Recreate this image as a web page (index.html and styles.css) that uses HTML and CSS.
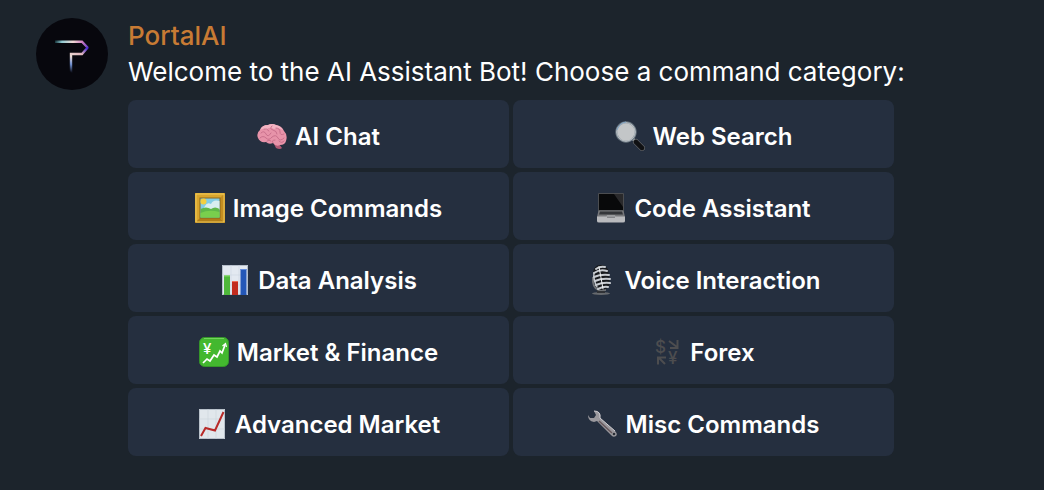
FILE: index.html
```html
<!DOCTYPE html>
<html lang="en">

<head>
    <meta charset="UTF-8">
    <meta name="viewport" content="width=device-width, initial-scale=1.0">
    <title>PortalAI</title>
    <link rel="stylesheet" href="styles.css">
</head>

<body>
    <main class="message">
        <svg class="avatar" viewBox="0 0 72 72" aria-hidden="true">
            <defs>
                <linearGradient id="logo" gradientUnits="userSpaceOnUse" x1="19" y1="22" x2="54" y2="30">
                    <stop offset="0" stop-color="#0d2a30" />
                    <stop offset=".2" stop-color="#8fc9d2" />
                    <stop offset=".5" stop-color="#f2dcd6" />
                    <stop offset=".75" stop-color="#cf7fc0" />
                    <stop offset="1" stop-color="#4326c8" />
                </linearGradient>
                <linearGradient id="logoStem" gradientUnits="userSpaceOnUse" x1="50" y1="30" x2="36" y2="55">
                    <stop offset="0" stop-color="#4a2bd0" />
                    <stop offset=".25" stop-color="#e0b5bd" />
                    <stop offset=".5" stop-color="#ead9d2" />
                    <stop offset=".75" stop-color="#6f8fd0" />
                    <stop offset="1" stop-color="#08080f" />
                </linearGradient>
            </defs>
            <circle cx="36" cy="36" r="36" fill="#07070d" />
            <g fill="none" stroke-width="2.4">
                <path d="M19 23.7H46L52 30" stroke="url(#logo)" />
                <path d="M51.7 29.5L46 36H35V55" stroke="url(#logoStem)" />
            </g>
        </svg>

        <div class="content">
            <h1 class="sender">PortalAI</h1>
            <p class="text">Welcome to the AI Assistant Bot! Choose a command category:</p>

            <div class="keyboard">
                <button type="button">
                    <svg class="icon" viewBox="0 0 30 30" aria-hidden="true">
                        <path d="M17 23L22 23L25 27Q23 29 19 27Z" fill="#b25a75" />
                        <path d="M1 17Q-1 12 3 9Q5 4 11 4Q15 2 19 4Q25 5 27 10Q31 14 29 20Q28 24 23 24Q19 26 16 22Q12 24 9 21Q3 22 1 17Z" fill="#e793a9" />
                        <path d="M3 9Q5 4 11 4Q15 2 19 4Q24 5 26 9Q21 6 17 8Q12 5 9 9Q6 7 3 9Z" fill="#f3b3c2" />
                        <path d="M4 12Q7 9 9 13T14 12M7 8Q10 7 12 10M15 5Q12 8 16 9T20 13M19 7Q23 7 23 11T27 13M3 17Q6 14 9 17T15 16Q19 13 21 17T27 17M16 22Q14 19 18 19M22 20Q25 23 27 20M10 20Q12 18 14 20" fill="none" stroke="#c9708c" stroke-width="1" stroke-linecap="round" />
                    </svg>
                    AI Chat
                </button>
                <button type="button">
                    <svg class="icon" viewBox="0 0 30 30" aria-hidden="true">
                        <path d="M18 18L22 22" stroke="#a6abb0" stroke-width="3" />
                        <path d="M21 21L27 27" stroke="#6a6d70" stroke-width="6" stroke-linecap="round" />
                        <path d="M21 21L27 27" stroke="#101113" stroke-width="4.6" stroke-linecap="round" />
                        <circle cx="11" cy="11" r="9.700" fill="#c3c6c8" stroke="#68747e" stroke-width="2" />
                        <circle cx="11" cy="11" r="9.300" fill="none" stroke="#e5eaed" stroke-width=".7" />
                        <path d="M2 9Q4 2 11 1" fill="none" stroke="#7fa3c4" stroke-width="1" />
                    </svg>
                    Web Search
                </button>
                <button type="button">
                    <svg class="icon" viewBox="0 0 30 30" aria-hidden="true">
                        <path d="M0 0H30V30H0Z" fill="#d9a52c" />
                        <path d="M0 30L5 25H25L30 30Z" fill="#b07d18" />
                        <path d="M30 0V30L25 25V5Z" fill="#c48e20" />
                        <path d="M1 1H29V29H1Z" fill="none" stroke="#f0ca58" stroke-width="1" />
                        <path d="M4.500 4.500H25.500V25.500H4.500Z" fill="#8b661a" />
                        <path d="M5.500 5.500H24.500V24.500H5.500Z" fill="#83cde5" />
                        <path d="M10 13Q12 9 16 11Q18 6 24.500 8V17H8Z" fill="#d8eef0" />
                        <circle cx="8.500" cy="8.500" r="3" fill="#f4cf3f" />
                        <path d="M5.500 16Q11 13 16 16Q20 13 24.500 16V24.500H5.500Z" fill="#5fb84a" />
                        <path d="M5.500 20Q14 16 24.500 19V24.500H5.500Z" fill="#79cf4d" />
                    </svg>
                    Image Commands
                </button>
                <button type="button">
                    <svg class="icon" viewBox="0 0 30 30" aria-hidden="true">
                        <rect x="2" y="0" width="26" height="19" rx="1" fill="#4b4d50" />
                        <path d="M3 1H27V17H3Z" fill="#08090a" />
                        <path d="M18 1H27V14Z" fill="#29292b" />
                        <path d="M2.500 17.500H27.500L29 24H1Z" fill="#77787b" />
                        <path d="M4 18.500H26L27 21.500H3Z" fill="#333539" />
                        <path d="M11 22H19L19.500 24H10.500Z" fill="#9b9c9f" />
                        <path d="M1 23.500H29V28Q29 29.500 27 29.500H3Q1 29.500 1 28Z" fill="#b9babd" />
                        <path d="M11 23.500H19V25H11Z" fill="#85868a" />
                    </svg>
                    Code Assistant
                </button>
                <button type="button">
                    <svg class="icon" viewBox="0 0 30 30" aria-hidden="true">
                        <path d="M2 0H28V30H2Z" fill="#e3e9f1" />
                        <path d="M2.500 .5H27.500V29.500H2.500Z" fill="none" stroke="#b4bdc9" />
                        <path d="M2 10H28M2 20H28M11 0V30M19 0V30" stroke="#ccd6e3" stroke-width=".6" />
                        <path d="M4 10.500H10V30H4Z" fill="#4fb83b" />
                        <path d="M12 16H18V30H12Z" fill="#c32c20" />
                        <path d="M20.500 4H26.500V30H20.500Z" fill="#2457b7" />
                        <path d="M4 11H10" stroke="#82dc62" />
                        <path d="M12 16.500H18" stroke="#ef6d5a" />
                        <path d="M20.500 4.500H26.500" stroke="#608be0" />
                    </svg>
                    Data Analysis
                </button>
                <button type="button">
                    <svg class="icon" viewBox="0 0 30 30" aria-hidden="true">
                        <ellipse cx="15" cy="28.500" rx="9" ry="1.500" fill="#66696d" />
                        <path d="M11 23H19V28H11Z" fill="#303236" />
                        <path d="M7 12Q6 23 13 25H20" fill="none" stroke="#6e7175" stroke-width="2" />
                        <rect x="8" y="0" width="15" height="25" rx="7" fill="#17191c" transform="rotate(-7 15 13)" />
                        <g fill="none" stroke="#c7cbd0" stroke-width="2" stroke-linecap="round">
                            <path d="M10 4Q14 1 19 2M8 8Q14 4 21 6M8 12Q15 9 23 10M9 16Q16 13 24 14M10 20Q17 17 24 18M12 24Q18 21 22 22" />
                            <path d="M13 2Q15 12 17 24" stroke="#f1f3f4" stroke-width="1" />
                            <path d="M8 8Q7 14 11 22" stroke-width="1.400" />
                        </g>
                    </svg>
                    Voice Interaction
                </button>
                <button type="button">
                    <svg class="icon" viewBox="0 0 30 30" aria-hidden="true">
                        <rect x=".5" y=".5" width="29" height="29" rx="5" fill="#43b82f" stroke="#35962a" />
                        <path d="M5 1.500H25" stroke="#73d45c" />
                        <g fill="none" stroke="#fff" stroke-width="1.700">
                            <path d="M4 26L8 22L11 24L15 18L18 20L21 14L23 16L26 8" />
                            <path d="M23.500 9L26.500 6.500L27.500 10" stroke-width="1.200" />
                        </g>
                        <text x="4" y="17" font-family="Inter, sans-serif" font-size="15" font-weight="500" fill="#fff">¥</text>
                    </svg>
                    Market &amp; Finance
                </button>
                <button type="button">
                    <svg class="icon" viewBox="0 0 30 30" aria-hidden="true">
                        <g fill="#4d4d4f" font-family="Inter, sans-serif" font-size="17" font-weight="500">
                            <text x="3" y="16">$</text>
                            <text x="16" y="27">¥</text>
                        </g>
                        <g fill="none" stroke="#4d4d4f" stroke-width="2">
                            <path d="M17 4L25 10M25.500 3V11H18" />
                            <path d="M13 27L7 21M6 27.500V20.500H14" />
                        </g>
                    </svg>
                    Forex
                </button>
                <button type="button">
                    <svg class="icon" viewBox="0 0 30 30" aria-hidden="true">
                        <path d="M2 0H28V30H2Z" fill="#e1e7ec" />
                        <path d="M2.500 .5H27.500V29.500H2.500Z" fill="none" stroke="#b8c1ca" />
                        <path d="M2 10H28M2 20H28M11 0V30M19 0V30" stroke="#cbd4dc" stroke-width=".6" />
                        <path d="M4 27L8.500 19L18 21.500L26.500 3" fill="none" stroke="#b82a28" stroke-width="2" />
                    </svg>
                    Advanced Market
                </button>
                <button type="button">
                    <svg class="icon" viewBox="0 0 30 30" aria-hidden="true">
                        <path d="M6 2L8 6L6 9L2 9L0 6Q0 12 6 13L9 12L23 26Q25 29 28 27Q30 25 27 22L12 9Q14 3 6 2Z" fill="#9a989d" />
                        <path d="M6 2Q13 2 12 9L27 22" fill="none" stroke="#d2d0d4" stroke-width="1" />
                        <path d="M11 12L24 24" stroke="#65575b" stroke-width="1.500" />
                        <circle cx="26" cy="25" r="1.300" fill="#292d35" />
                    </svg>
                    Misc Commands
                </button>
            </div>
        </div>
    </main>
</body>

</html>
```
FILE: styles.css
```css
* {
    box-sizing: border-box;
}

body {
    margin: 0;
    background: #1c242c;
    color: #ffffff;
    font-family: Inter, "Liberation Sans", sans-serif;
}

.message {
    display: flex;
    align-items: flex-start;
    gap: 20px;
    padding: 18px 36px 34px;
}

.avatar {
    flex: none;
    width: 72px;
    height: 72px;
}

.content {
    flex: 1;
    min-width: 0;
}

.sender,
.text {
    margin: 0;
    font-size: 26px;
    line-height: 36px;
    font-weight: 400;
}

.sender {
    color: #c87b34;
    font-weight: 500;
}

.keyboard {
    display: grid;
    grid-template-columns: 1fr 1fr;
    gap: 4px;
    margin: 10px 114px 0 0;
}

.keyboard button {
    display: flex;
    align-items: center;
    justify-content: center;
    gap: 8px;
    min-height: 68px;
    padding: 4px 12px 0;
    border: none;
    border-radius: 8px;
    background: #252f3f;
    color: #ffffff;
    font-family: inherit;
    font-size: 24px;
    font-weight: 600;
    cursor: pointer;
}

.keyboard button:hover {
    background: #2c384a;
}

.icon {
    flex: none;
    width: 30px;
    height: 30px;
}
```
